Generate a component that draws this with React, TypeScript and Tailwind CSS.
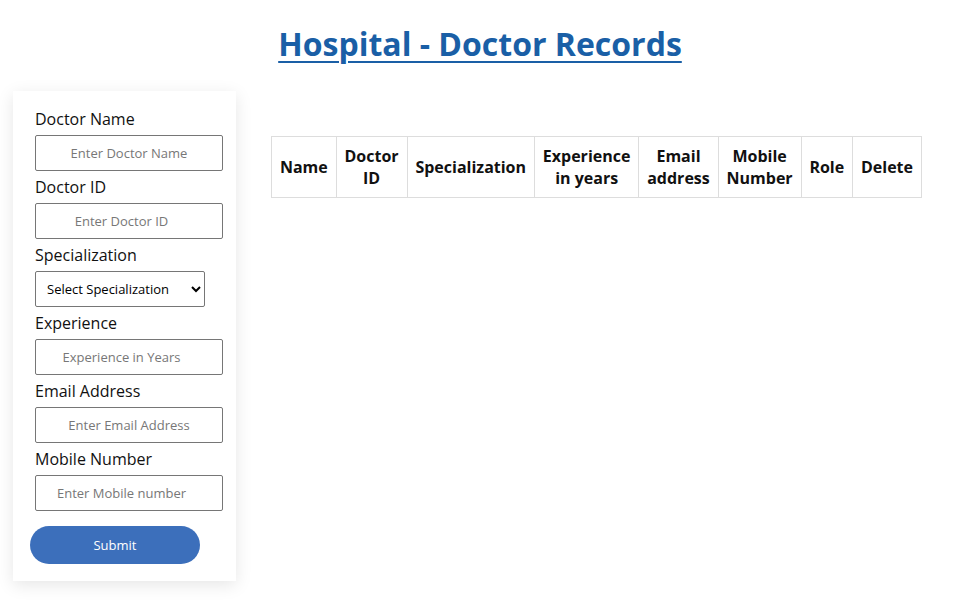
export default function App() {
  const fields = [
    { label: "Doctor Name", placeholder: "Enter Doctor Name", type: "text" },
    { label: "Doctor ID", placeholder: "Enter Doctor ID", type: "number" },
  ];
  const fields2 = [
    { label: "Experience", placeholder: "Experience in Years", type: "number" },
    { label: "Email Address", placeholder: "Enter Email Address", type: "email" },
    { label: "Mobile Number", placeholder: "Enter Mobile number", type: "number" },
  ];
  const headers = [
    ["Name"],
    ["Doctor", "ID"],
    ["Specialization"],
    ["Experience", "in years"],
    ["Email", "address"],
    ["Mobile", "Number"],
    ["Role"],
    ["Delete"],
  ];

  return (
    <div className="min-h-[600px] bg-white text-[#111] font-['Open_Sans',sans-serif]">
      <h1 className="pt-[20px] text-center text-[32px] leading-[48px] font-bold text-[#1a5fa6] underline underline-offset-[5px] decoration-[2px]">
        Hospital - Doctor Records
      </h1>

      <div className="flex items-start mt-[23px] pl-[13px]">
        <form className="w-[223px] bg-white shadow-[0_4px_16px_rgba(0,0,0,0.1)] pt-[12px] pb-[17px] pl-[17px]">
          {fields.map((f) => (
            <div key={f.label} className="pl-[5px]">
              <label className="block py-1 text-[16px] leading-6">{f.label}</label>
              <input
                type={f.type}
                placeholder={f.placeholder}
                className="block w-[188px] h-9 border border-[#767676] rounded-[2px] text-center text-[13px] placeholder:text-[#777] outline-none"
              />
            </div>
          ))}
          <div className="pl-[5px]">
            <label className="block py-1 text-[16px] leading-6">Specialization</label>
            <select className="block w-[170px] h-9 border border-[#767676] rounded-[2px] px-[7px] text-[13px] text-black bg-white">
              <option>Select Specialization</option>
            </select>
          </div>
          {fields2.map((f) => (
            <div key={f.label} className="pl-[5px]">
              <label className="block py-1 text-[16px] leading-6">{f.label}</label>
              <input
                type={f.type}
                placeholder={f.placeholder}
                className="block w-[188px] h-9 border border-[#767676] rounded-[2px] text-center text-[13px] placeholder:text-[#777] outline-none"
              />
            </div>
          ))}
          <button
            type="submit"
            className="mt-[15px] w-[170px] h-[38px] pt-px rounded-full bg-[#3c6fbb] text-white text-[13px]"
          >
            Submit
          </button>
        </form>

        <table className="ml-[35px] mt-[45px] border-collapse">
          <thead>
            <tr>
              {headers.map((h) => (
                <th
                  key={h.join(" ")}
                  className="border border-[#ddd] px-[7.9px] py-[8px] text-[16px] leading-[22px] font-bold text-center align-middle"
                >
                  {h.map((line, i) => (
                    <div key={i}>{line}</div>
                  ))}
                </th>
              ))}
            </tr>
          </thead>
          <tbody></tbody>
        </table>
      </div>
    </div>
  );
}
